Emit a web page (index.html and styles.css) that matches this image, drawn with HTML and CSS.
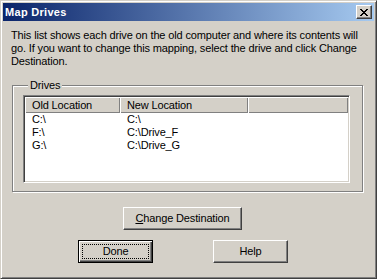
FILE: index.html
```html
<!DOCTYPE html>
<html lang="en">
<head>
    <meta charset="UTF-8">
    <title>Map Drives</title>
    <link rel="stylesheet" href="styles.css">
</head>
<body>
    <div class="window">
        <div class="titlebar">
            <span class="title">Map Drives</span>
            <button class="close" aria-label="Close">
                <svg width="8" height="7" viewBox="0 0 8 7">
                    <path d="M0 0h2v1H0zM6 0h2v1H6zM1 1h2v1H1zM5 1h2v1H5zM2 2h4v1H2zM3 3h2v1H3zM2 4h4v1H2zM1 5h2v1H1zM5 5h2v1H5zM0 6h2v1H0zM6 6h2v1H6z" fill="#000"/>
                </svg>
            </button>
        </div>

        <div class="content">
            <p class="intro">This list shows each drive on the old computer and where its contents will go. If you want to change this mapping, select the drive and click Change Destination.</p>

            <fieldset class="group">
                <legend>Drives</legend>
                <div class="listview">
                    <table>
                        <thead>
                            <tr>
                                <th class="col-old">Old Location</th>
                                <th class="col-new">New Location</th>
                                <th></th>
                            </tr>
                        </thead>
                        <tbody>
                            <tr><td>C:\</td><td>C:\</td><td></td></tr>
                            <tr><td>F:\</td><td>C:\Drive_F</td><td></td></tr>
                            <tr><td>G:\</td><td>C:\Drive_G</td><td></td></tr>
                        </tbody>
                    </table>
                </div>
            </fieldset>

            <div class="change-row">
                <button class="button wide"><u>C</u>hange Destination</button>
            </div>

            <div class="actions">
                <button class="button default">Done</button>
                <button class="button">Help</button>
            </div>
        </div>
    </div>
</body>
</html>
```

FILE: styles.css
```css
:root {
    --face: #d4d0c8;
    --light: #fff;
    --shadow: #808080;
    --dark: #404040;
}

* {
    box-sizing: border-box;
    margin: 0;
    padding: 0;
}

body {
    background: var(--face);
    font-family: 'Liberation Sans', Arial, sans-serif;
    font-size: 11px;
    line-height: 13px;
    color: #000;
}

.window {
    width: 377px;
    height: 279px;
    display: flex;
    flex-direction: column;
    padding: 2px;
    border: 1px solid;
    border-color: var(--face) var(--dark) var(--dark) var(--face);
    box-shadow: inset 1px 1px 0 var(--light), inset -1px -1px 0 var(--shadow);
}

.titlebar {
    height: 18px;
    display: flex;
    align-items: center;
    padding: 0 2px;
    background: linear-gradient(to right, #0a246a, #a6caf0);
}

.title {
    color: #fff;
    font-weight: bold;
    letter-spacing: 0.3px;
}

.close {
    margin-left: auto;
    width: 16px;
    height: 14px;
    display: flex;
    align-items: center;
    justify-content: center;
    background: var(--face);
    border: 1px solid;
    border-color: var(--light) var(--dark) var(--dark) var(--light);
    box-shadow: inset -1px -1px 0 var(--shadow);
}

.content {
    padding: 0 0 0 8px;
    letter-spacing: -0.14px;
}

.intro {
    width: 356px;
    margin-top: 8px;
}

/* etched group box */
.group {
    width: 351px;
    height: 113px;
    margin: 11px 0 0 1px;
    padding: 0 0 0 10px;
    border: 1px solid var(--shadow);
    box-shadow: 1px 1px 0 var(--light), inset 1px 1px 0 var(--light);
    min-inline-size: 0;
}

.group legend {
    margin-left: 5px;
    padding: 0 2px;
    background: var(--face);
}

.listview {
    width: 327px;
    height: 88px;
    margin-top: 3px;
    padding: 1px;
    background: #fff;
    border: 1px solid;
    border-color: var(--shadow) var(--light) var(--light) var(--shadow);
    box-shadow: inset 1px 1px 0 var(--dark), inset -1px -1px 0 var(--face);
}

table {
    width: 323px;
    border-collapse: collapse;
    table-layout: fixed;
}

th {
    height: 16px;
    padding: 0 0 0 7px;
    text-align: left;
    font-weight: normal;
    background: var(--face);
    box-shadow: inset 1px 1px 0 var(--light), inset -1px -1px 0 var(--shadow);
    white-space: nowrap;
}

.col-old {
    width: 95px;
}

.col-new {
    width: 128px;
}

td {
    height: 13px;
    padding: 0 0 0 7px;
    white-space: nowrap;
}

.button {
    width: 75px;
    height: 23px;
    font: inherit;
    letter-spacing: inherit;
    color: #000;
    background: var(--face);
    border: 1px solid;
    border-color: var(--light) var(--dark) var(--dark) var(--light);
    box-shadow: inset -1px -1px 0 var(--shadow);
}

.button.wide {
    width: 119px;
}

.button.default {
    border-color: #000;
    box-shadow: inset 1px 1px 0 var(--light), inset -1px -1px 0 var(--dark), inset -2px -2px 0 var(--shadow);
    outline: 1px dotted #000;
    outline-offset: -5px;
}

.change-row {
    margin-top: 15px;
    padding-left: 112px;
}

.actions {
    display: flex;
    gap: 60px;
    margin-top: 10px;
    padding-left: 67px;
}
```
